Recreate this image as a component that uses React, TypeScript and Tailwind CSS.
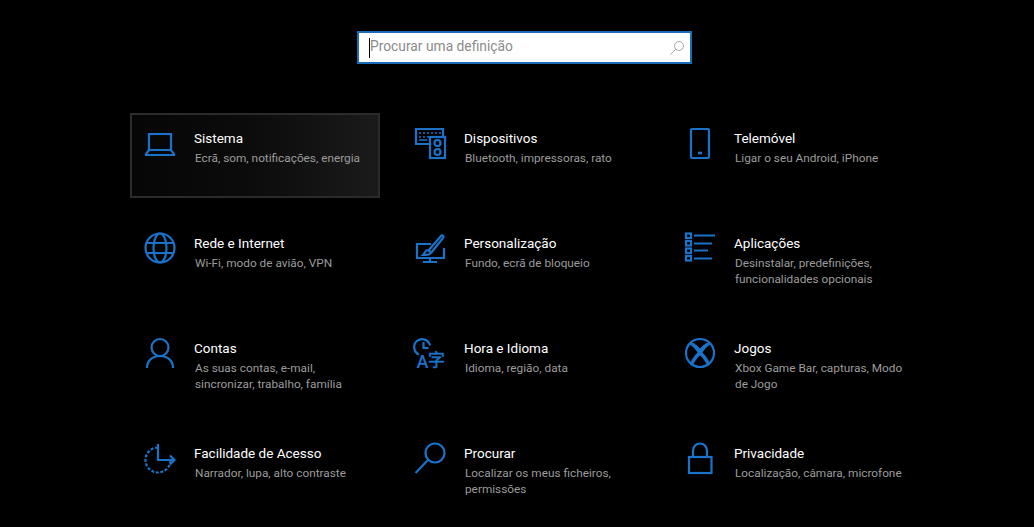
import React from 'react';

const font = "font-['Roboto','Noto_Sans',sans-serif]";

// Icones desenhados em 32x32
const Icon = ({ children }: { children: React.ReactNode }) => (
  <svg
    viewBox="0 0 32 32"
    width="32"
    height="32"
    fill="none"
    stroke="#1a72c9"
    strokeWidth="2.200"
    className="shrink-0 overflow-visible"
  >
    {children}
  </svg>
);

const Laptop = () => (
  <Icon>
    <path d="M5 23V7h22v16" />
    <path d="M5 23 2 27v1h28v-1l-3-4z" />
  </Icon>
);

const Devices = () => (
  <Icon>
    <path d="M16 17H2V2h27v8" />
    <path d="M5 6h2M9 6h2M13 6h2M17 6h2M21 6h2M25 6h2M5 10h2M9 10h2M13 10h2M5 13h8" strokeWidth="1.600" />
    <rect x="16" y="10" width="15" height="21" />
    <circle cx="23.500" cy="16" r="3" />
    <circle cx="23.500" cy="25" r="3" />
  </Icon>
);

const Phone = () => (
  <Icon>
    <rect x="7" y="2" width="18" height="29" rx="1" />
    <path d="M14 26h4" strokeWidth="2.600" />
  </Icon>
);

const Globe = () => (
  <Icon>
    <circle cx="16" cy="16" r="14.500" />
    <ellipse cx="16" cy="16" rx="6.500" ry="14.500" />
    <path d="M3 11h26M3 21h26" />
  </Icon>
);

const Brush = () => (
  <Icon>
    <path d="M17 12H3v14h27V16" />
    <path d="M16 26v4M9 30h14" />
    <path d="M14 19 27 4c1.500-1.500 3.500.5 2 2L17 21" />
    <path d="M14 18c-3 0-3 3-5 5 4 0 8-1 8-3z" />
  </Icon>
);

const Apps = () => (
  <Icon>
    <rect x="2" y="1.500" width="5" height="4.500" />
    <rect x="2" y="9" width="5" height="4.500" />
    <rect x="2" y="16.500" width="5" height="4.500" />
    <rect x="2" y="24" width="5" height="4.500" />
    <path d="M10 3.500h21M10 11.500h18M10 18.500h14M10 26.500h18" />
  </Icon>
);

const Person = () => (
  <Icon>
    <circle cx="16" cy="10.500" r="8.500" />
    <path d="M3 31c0-7 5-12 13-12s13 5 13 12" />
  </Icon>
);

const TimeLang = () => (
  <Icon>
    <path d="M5 17.500a8 8 0 1 1 11-9" />
    <path d="M9.500 5v6h5" />
    <text x="2.500" y="31" fill="#1a72c9" stroke="none" fontSize="18" fontWeight="500" fontFamily="Roboto">A</text>
    <text x="14" y="29" fill="#1a72c9" stroke="#1a72c9" strokeWidth="0.500" fontSize="17" fontFamily="Noto Sans CJK SC">字</text>
  </Icon>
);

const Xbox = () => (
  <Icon>
    <circle cx="16" cy="16" r="14" />
    <path
      d="M8 5.500C11 6.500 14 9 16 11.500 18 9 21 6.500 24 5.500L26 7.500C23 9.500 20 13 18.500 15.500 22 19 25 23.500 26 27L23.500 29C21.500 24.500 18.500 20.500 16 18.500 13.500 20.500 10.500 24.500 8.500 29L6 27C7 23.500 10 19 13.500 15.500 12 13 9 9.500 6 7.500Z"
      fill="#1a72c9"
      stroke="none"
    />
  </Icon>
);

const Ease = () => (
  <Icon>
    <path d="M14 5.500a12.500 12.500 0 1 0 12.500 12.500" strokeDasharray="3 1.600" />
    <path d="M14 2v16h16" />
    <path d="m26 13.500 4.500 4.500-4.500 4.500" />
  </Icon>
);

const Search = () => (
  <Icon>
    <circle cx="21" cy="11" r="9.500" />
    <path d="M14 18 1.500 31" />
  </Icon>
);

const Lock = () => (
  <Icon>
    <rect x="5" y="15" width="22.500" height="16" />
    <path d="M9 15V9c0-10 14-10 14 0v6" />
  </Icon>
);

const items = [
  { Ico: Laptop, title: 'Sistema', desc: 'Ecrã, som, notificações, energia' },
  { Ico: Devices, title: 'Dispositivos', desc: 'Bluetooth, impressoras, rato' },
  { Ico: Phone, title: 'Telemóvel', desc: 'Ligar o seu Android, iPhone' },
  { Ico: Globe, title: 'Rede e Internet', desc: 'Wi-Fi, modo de avião, VPN' },
  { Ico: Brush, title: 'Personalização', desc: 'Fundo, ecrã de bloqueio' },
  { Ico: Apps, title: 'Aplicações', desc: 'Desinstalar, predefinições, funcionalidades opcionais' },
  { Ico: Person, title: 'Contas', desc: 'As suas contas, e-mail, sincronizar, trabalho, família' },
  { Ico: TimeLang, title: 'Hora e Idioma', desc: 'Idioma, região, data' },
  { Ico: Xbox, title: 'Jogos', desc: 'Xbox Game Bar, capturas, Modo de Jogo' },
  { Ico: Ease, title: 'Facilidade de Acesso', desc: 'Narrador, lupa, alto contraste' },
  { Ico: Search, title: 'Procurar', desc: 'Localizar os meus ficheiros, permissões' },
  { Ico: Lock, title: 'Privacidade', desc: 'Localização, câmara, microfone' },
];

const App = () => {
  return (
    <div className={`h-[527px] w-[1034px] overflow-hidden bg-black flex flex-col ${font}`}>
      {/* Caixa de pesquisa */}
      <div className="mt-[31px] ml-[357px] h-[33px] w-[335px] shrink-0 bg-white border-2 border-[#1a6cb8] flex items-center pl-[10px] pr-[5px]">
        <span className="w-px h-[20px] bg-black shrink-0"></span>
        <span className="flex-1 text-[13.800px] leading-[20px] mb-[3px] text-[#8a8a8a]">Procurar uma definição</span>
        <svg viewBox="0 0 16 16" width="16" height="16" fill="none" stroke="#a8a8a8" strokeWidth="1" className="shrink-0">
          <circle cx="10" cy="6" r="4.500" />
          <path d="M6.800 9.200 1.500 14.500" />
        </svg>
      </div>

      {/* Grelha de categorias */}
      <div className="mt-[49px] ml-[130px] grid grid-cols-[250px_250px_250px] auto-rows-[85px] gap-x-[20px] gap-y-[20px]">
        {items.map(({ Ico, title, desc }, i) => (
          <div
            key={title}
            className={`flex gap-[18px] pl-[12px] pt-[12px] border-2 ${
              i === 0 ? 'border-[#2b2b2b] bg-linear-to-r from-[#060606] via-[#0c0c0c] to-[#1b1b1b]' : 'border-transparent'
            }`}
          >
            <Ico />
            <div className="flex flex-col">
              <span className="text-[13.500px] leading-[20px] mt-[1px] text-white">{title}</span>
              <span className="text-[11.800px] leading-[16px] mt-[2px] ml-[1px] w-[180px] text-[#9c9c9c]">{desc}</span>
            </div>
          </div>
        ))}
      </div>
    </div>
  );
};

export default App;
